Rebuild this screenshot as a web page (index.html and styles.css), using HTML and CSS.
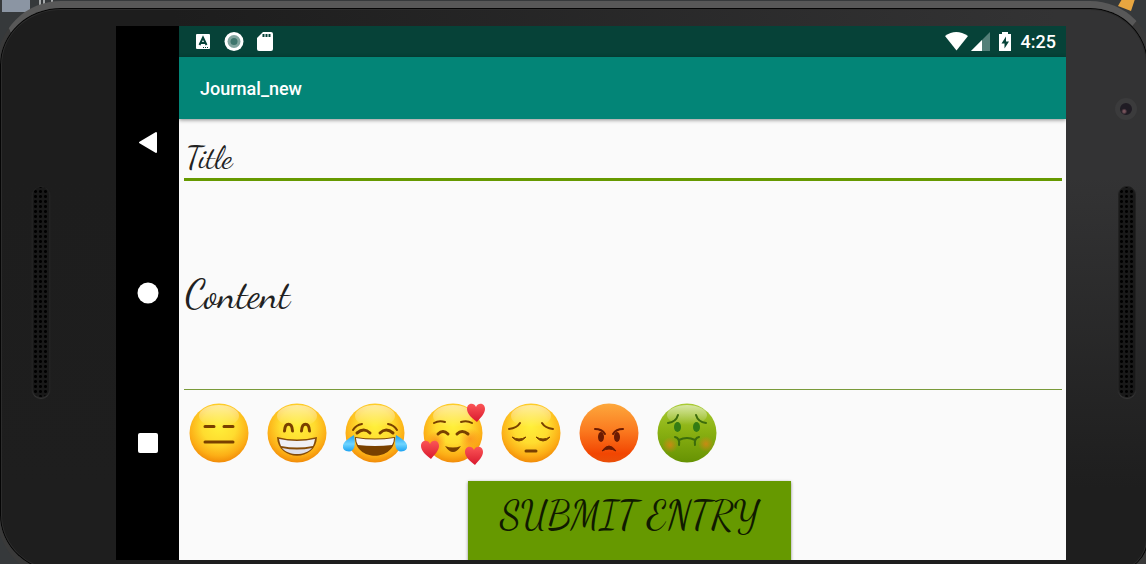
FILE: index.html
```html
<!DOCTYPE html>
<html lang="en">
<head>
<meta charset="utf-8">
<meta name="viewport" content="width=device-width, initial-scale=1">
<title>Journal_new</title>
<link rel="stylesheet" href="styles.css">
</head>
<body>
<div class="desk">
  <svg class="desk-scraps" width="100%" height="16" aria-hidden="true">
    <rect x="2" width="28" height="12" fill="#8b95a3"/>
    <path d="M40 0v5M44 0v5M52 0v4" stroke="#a4a7a8" stroke-width="2"/>
    <svg x="100%" width="30" height="16" overflow="visible"><path d="M-28 6L-24-1h13l-4 12z" fill="#e8a640"/></svg>
  </svg>
  <div class="phone">
    <div class="bezel bezel-left"><span class="speaker"></span></div>
    <div class="screen">
      <nav class="nav" aria-label="System">
        <button class="nav-button" aria-label="Back"><svg width="24" height="24" viewBox="0 0 24 24"><path d="M4 12.500L20 3v19z" fill="#fff" stroke="#fff" stroke-width="2" stroke-linejoin="round"/></svg></button>
        <button class="nav-button" aria-label="Home"><svg width="24" height="24" viewBox="0 0 24 24"><circle cx="12" cy="12" r="10.500" fill="#fff"/></svg></button>
        <button class="nav-button" aria-label="Recent apps"><svg width="24" height="24" viewBox="0 0 24 24"><rect x="2" y="1" width="20" height="20" rx="2" fill="#fff"/></svg></button>
      </nav>
      <div class="app">
        <div class="status">
          <svg width="16" height="20" viewBox="0 0 16 20" aria-hidden="true"><rect x="1" y="2" width="14" height="15" rx="1" fill="#fff"/><path d="M4.500 13L8 5.500l3.500 7.500M6 11h4" fill="none" stroke="#064238" stroke-width="2"/><path d="M8 15.500h6" stroke="#064238" stroke-dasharray="1 1"/></svg>
          <svg width="20" height="20" viewBox="0 0 20 20" aria-hidden="true"><circle cx="10" cy="9.500" r="9.500" fill="#fff"/><circle cx="10" cy="9.500" r="6.500" fill="#82a59f"/><circle cx="10" cy="9.500" r="3.500" fill="#3f766d"/></svg>
          <svg width="18" height="20" viewBox="0 0 18 20" aria-hidden="true"><path d="M6 0h8q2 0 2 2v15q0 2-2 2H2q-2 0-2-2V6z" fill="#fff"/><path d="M6.500 2v3M9.500 2v3M12.500 2v3" stroke="#064238" stroke-width="2"/></svg>
          <span class="status-space"></span>
          <svg width="24" height="20" viewBox="0 0 24 20" aria-hidden="true"><path d="M1 4Q12-4 24 4L12.500 18.500z" fill="#fff"/></svg>
          <svg width="20" height="20" viewBox="0 0 20 20" aria-hidden="true"><path d="M1 19L20 0v19z" fill="#547f78"/><path d="M1 19L12 8v11z" fill="#fff"/></svg>
          <svg class="battery" width="14" height="20" viewBox="0 0 14 20" aria-hidden="true"><path d="M4 0h6v2h3v17H1V2h3z" fill="#fff"/><path d="M8 4.500l-4.500 7H6.500v5l4.500-7H8z" fill="#064238"/></svg>
          <time class="clock">4:25</time>
        </div>
        <header class="appbar"><h1 class="appbar-title">Journal_new</h1></header>
        <form class="entry">
          <input class="field title-field" type="text" placeholder="Title" aria-label="Title">
          <textarea class="field content-field" placeholder="Content" aria-label="Content"></textarea>
          <div class="moods">
            <svg class="defs" width="0" height="0" aria-hidden="true"><defs>
              <radialGradient id="yellow" cx=".5" cy=".38" r=".65"><stop offset="0" stop-color="#fff03a"/><stop offset=".45" stop-color="#ffdc2f"/><stop offset=".78" stop-color="#fcae16"/><stop offset="1" stop-color="#ef8205"/></radialGradient>
              <linearGradient id="red" x2="0" y2="1"><stop offset="0" stop-color="#fda83c"/><stop offset=".45" stop-color="#fb7b20"/><stop offset=".85" stop-color="#f24602"/><stop offset="1" stop-color="#e95009"/></linearGradient>
              <linearGradient id="green" x2="0" y2="1"><stop offset="0" stop-color="#a9cb35"/><stop offset=".45" stop-color="#8bb213"/><stop offset="1" stop-color="#669203"/></linearGradient>
              <linearGradient id="shine" x2="0" y2="1"><stop offset="0" stop-color="#fff" stop-opacity=".55"/><stop offset="1" stop-color="#fff" stop-opacity="0"/></linearGradient>
              <linearGradient id="tear" x2="0" y2="1"><stop offset="0" stop-color="#1c9df0"/><stop offset=".55" stop-color="#6fd5ff"/><stop offset="1" stop-color="#1ba2f2"/></linearGradient>
              <radialGradient id="blush"><stop offset="0" stop-color="#fb7a18" stop-opacity=".6"/><stop offset="1" stop-color="#fb7a18" stop-opacity="0"/></radialGradient>
              <linearGradient id="heart-fill" x2="0" y2="1"><stop offset="0" stop-color="#fb5556"/><stop offset="1" stop-color="#d9182e"/></linearGradient>
              <path id="heart" d="M1 10C-4 6-9 2-9-3C-9-9-2-10 0-5C2-10 9-9 9-3C9 2 4 6 1 10z" fill="url(#heart-fill)"/>
            </defs></svg>

            <button class="mood" type="button" aria-label="Expressionless"><svg class="face" viewBox="-30 -30 60 60"><circle r="29.500" fill="url(#yellow)"/><ellipse cy="-17" rx="20" ry="11" fill="url(#shine)"/><path d="M-14-6.500h9M5-6.500h9M-14 9h28" stroke="#794000" stroke-width="3" stroke-linecap="round"/></svg></button>

            <button class="mood" type="button" aria-label="Grinning"><svg class="face" viewBox="-30 -30 60 60"><circle r="29.500" fill="url(#yellow)"/><ellipse cy="-17" rx="20" ry="11" fill="url(#shine)"/><path d="M-12.500-2C-12-11-5-11-4.500-2M4.500-2C5-11 12-11 12.500-2" fill="none" stroke="#794000" stroke-width="3" stroke-linecap="round"/><path d="M-20 4Q0 9 20 4C19 29-19 29-20 4z" fill="#854b08"/><path d="M-18 6Q0 10 18 6Q17 11 16 13Q0 16-16 13Q-17 11-18 6z" fill="#f0f0f5"/><path d="M-15 15Q0 18 15 15C8 23-8 23-15 15z" fill="#dfdfe9"/></svg></button>

            <button class="mood" type="button" aria-label="Tears of joy"><svg class="face" viewBox="-30 -30 60 60"><circle r="29.500" fill="url(#yellow)"/><ellipse cy="-17" rx="20" ry="11" fill="url(#shine)"/><path d="M-22-3Q-19-8-13-9M22-3Q19-8 13-9" fill="none" stroke="#794000" stroke-width="2" stroke-linecap="round"/><path d="M-18 0Q-11-6-5 0M18 0Q11-6 5 0" fill="none" stroke="#794000" stroke-width="3" stroke-linecap="round"/><path d="M-20 4Q0 7 20 4C20 29-20 29-20 4z" fill="#794000"/><path d="M-19 5Q0 8 19 5Q19 9 17 12Q0 14-17 12Q-19 9-19 5z" fill="#f7f7fb"/><path id="drop" d="M-21 2Q-18 18-26 18.500Q-33 18-32 12Q-31 8-21 2z" fill="url(#tear)"/><use href="#drop" transform="scale(-1 1)"/></svg></button>

            <button class="mood" type="button" aria-label="Loved"><svg class="face" viewBox="-30 -30 60 60"><circle r="29.500" fill="url(#yellow)"/><ellipse cy="-17" rx="20" ry="11" fill="url(#shine)"/><circle cx="-17" cy="8" r="10" fill="url(#blush)"/><circle cx="17" cy="6" r="11" fill="url(#blush)"/><path d="M-19-10Q-14-13-8-11M8-11Q14-13 19-10" fill="none" stroke="#794000" stroke-width="2" stroke-linecap="round"/><path d="M-15 1Q-10-4-5 1M4 1Q9-4 15 1" fill="none" stroke="#794000" stroke-width="3" stroke-linecap="round"/><path d="M-8 13Q0 16 8 13Q0 25-8 13z" fill="#794000"/><use href="#heart" x="23" y="-21"/><use href="#heart" x="-23" y="16"/><use href="#heart" x="21" y="22"/></svg></button>

            <button class="mood" type="button" aria-label="Pensive"><svg class="face" viewBox="-30 -30 60 60"><circle r="29.500" fill="url(#yellow)"/><ellipse cy="-17" rx="20" ry="11" fill="url(#shine)"/><path d="M-22-4Q-14-5-11-10M22-4Q14-5 11-10" fill="none" stroke="#794000" stroke-width="2" stroke-linecap="round"/><path d="M-19 4Q-12 8-5 4Q-12 12-19 4zM19 4Q12 8 5 4Q12 12 19 4z" fill="#794000" stroke="#794000" stroke-linejoin="round"/><path d="M-5 18H5" stroke="#794000" stroke-width="3" stroke-linecap="round"/></svg></button>

            <button class="mood" type="button" aria-label="Angry"><svg class="face" viewBox="-30 -30 60 60"><circle r="29.500" fill="url(#red)"/><path d="M-14-4Q-7-4-4 1M14-4Q7-4 4 1" fill="none" stroke="#6b1b02" stroke-width="2" stroke-linecap="round"/><ellipse cx="-8" cy="4" rx="3" ry="5" fill="#6b1b02"/><ellipse cx="8" cy="4" rx="3" ry="5" fill="#6b1b02"/><path d="M-7 18Q0 8 7 18Q0 14-7 18z" fill="#6b1b02" stroke="#6b1b02" stroke-linejoin="round"/></svg></button>

            <button class="mood" type="button" aria-label="Nauseated"><svg class="face" viewBox="-30 -30 60 60"><circle r="29.500" fill="url(#green)"/><ellipse cy="-18" rx="20" ry="10" fill="url(#shine)"/><circle cx="-17" cy="12" r="8" fill="url(#blush)"/><circle cx="19" cy="11" r="8" fill="url(#blush)"/><path d="M-19-10Q-11-11-9-18M19-10Q11-11 9-18" fill="none" stroke="#3c6c0c" stroke-width="2" stroke-linecap="round"/><ellipse cx="-9.500" cy="-6" rx="3.500" ry="5" fill="#337c14"/><ellipse cx="9.500" cy="-6" rx="3.500" ry="5" fill="#337c14"/><path d="M-12 4Q-7 5-8 12M12 4Q7 5 8 12M-8 7Q0 3 8 7" fill="none" stroke="#3c6c0c" stroke-width="2" stroke-linecap="round"/></svg></button>
          </div>
          <button class="submit" type="submit">SUBMIT ENTRY</button>
        </form>
      </div>
    </div>
    <div class="bezel bezel-right"><span class="speaker"></span><span class="camera"></span></div>
  </div>
</div>
</body>
</html>
```
FILE: styles.css
```css
* { box-sizing: border-box; }

body {
  margin: 0;
  font-family: Roboto, "Liberation Sans", sans-serif;
}

button {
  border: 0;
  padding: 0;
  background: none;
  cursor: pointer;
}

svg { display: block; flex: none; }

.desk {
  position: relative;
  height: 100vh;
  overflow: hidden;
  background: #36393b;
}

.desk-scraps {
  position: absolute;
  top: 0;
  left: 0;
}

.phone {
  position: relative;
  display: grid;
  grid-template-columns: 116px minmax(0, 1fr) 82px;
  height: calc(100vh + 14px);
  margin: 1px -8px 0 -3px;
  padding: 18px 0 10px;
  border: solid #3a3a3a;
  border-width: 7px 6px 7px 3px;
  border-top-color: #585858;
  border-radius: 64px 64px 40px 64px;
  background: linear-gradient(#0000 30%, #1e1e1e 85%), linear-gradient(90deg, #1d1d1d 15%, #333334 92%);
  box-shadow: inset 0 0 0 1px #050505, inset 0 0 0 2px #2c2c2c;
}

.bezel {
  position: relative;
  display: flex;
  align-items: center;
  padding-bottom: 4px;
}

.bezel-left { padding-left: 32px; }
.bezel-right { padding-left: 52px; }

.speaker {
  width: 18px;
  height: 40%;
  border-radius: 9px;
  border: 1px solid #222;
  background: radial-gradient(circle, #000 0 1px, transparent 2px) 0 2px / 5px 5px #191919;
  box-shadow: 0 1px 1px #383838;
}

.camera {
  position: absolute;
  top: 72px;
  left: 49px;
  width: 22px;
  height: 22px;
  border: 5px solid #3b3b3c;
  border-radius: 50%;
  background: radial-gradient(circle at 35% 70%, #75525a 0 1px, #201c24 3px);
}

.screen {
  display: flex;
  min-width: 0;
  height: calc(100vh - 30px);
  overflow: hidden;
  background: #fafafa;
}

.nav {
  display: flex;
  flex-direction: column;
  flex: none;
  justify-content: space-between;
  width: 63px;
  padding: 104px 0;
  background: #000;
}

.nav-button {
  display: grid;
  place-items: center;
  height: 24px;
}

.app {
  display: flex;
  flex: 1;
  flex-direction: column;
  min-width: 0;
}

.status {
  display: flex;
  flex: none;
  align-items: center;
  gap: 13px;
  height: 31px;
  padding: 0 10px 0 16px;
  background: #064238;
}

.status-space { flex: 1; }
.status-space ~ svg { margin-right: -11px; }
.status .battery { margin: 0 -4px 0 6px; }

.clock {
  color: #fff;
  font-size: 18px;
  font-weight: 500;
}

.appbar {
  display: flex;
  flex: none;
  align-items: center;
  height: 62px;
  padding-left: 21px;
  background: #038577;
  box-shadow: 0 1px 4px rgba(0, 0, 0, .45);
}

.appbar-title {
  margin: 0;
  color: #fff;
  font-size: 18px;
  font-weight: 500;
}

.entry {
  display: flex;
  flex: none;
  flex-direction: column;
  padding: 12px 4px 0 5px;
}

.field {
  display: block;
  width: 100%;
  border: 0 solid #690;
  border-bottom-width: 3px;
  border-radius: 0;
  outline: 0;
  background: none;
  color: #212121;
  font-family: "Dancing Script", "Liberation Serif", cursive;
  resize: none;
}

.field::placeholder {
  color: #212121;
  opacity: 1;
}

.title-field {
  height: 50px;
  padding: 6px 2px 0;
  font-size: 31px;
}

.content-field {
  height: 209px;
  padding: 94px 1px 0;
  border-bottom: 1px solid #7a9a3a;
  font-size: 39px;
  line-height: 40px;
}

.moods {
  position: relative;
  display: flex;
  flex-wrap: wrap;
  gap: 18px;
  padding: 13px 5px 18px;
}

.defs { position: absolute; }

.mood {
  width: 60px;
  height: 60px;
}

.face {
  width: 60px;
  height: 60px;
  overflow: visible;
}

.submit {
  align-self: center;
  height: 90px;
  margin-left: 13px;
  padding: 0 32px 22px;
  background: #690;
  box-shadow: 0 1px 3px rgba(0, 0, 0, .45);
  color: #101a00;
  font-family: "Dancing Script", "Liberation Serif", cursive;
  font-size: 39px;
  white-space: nowrap;
}
```
